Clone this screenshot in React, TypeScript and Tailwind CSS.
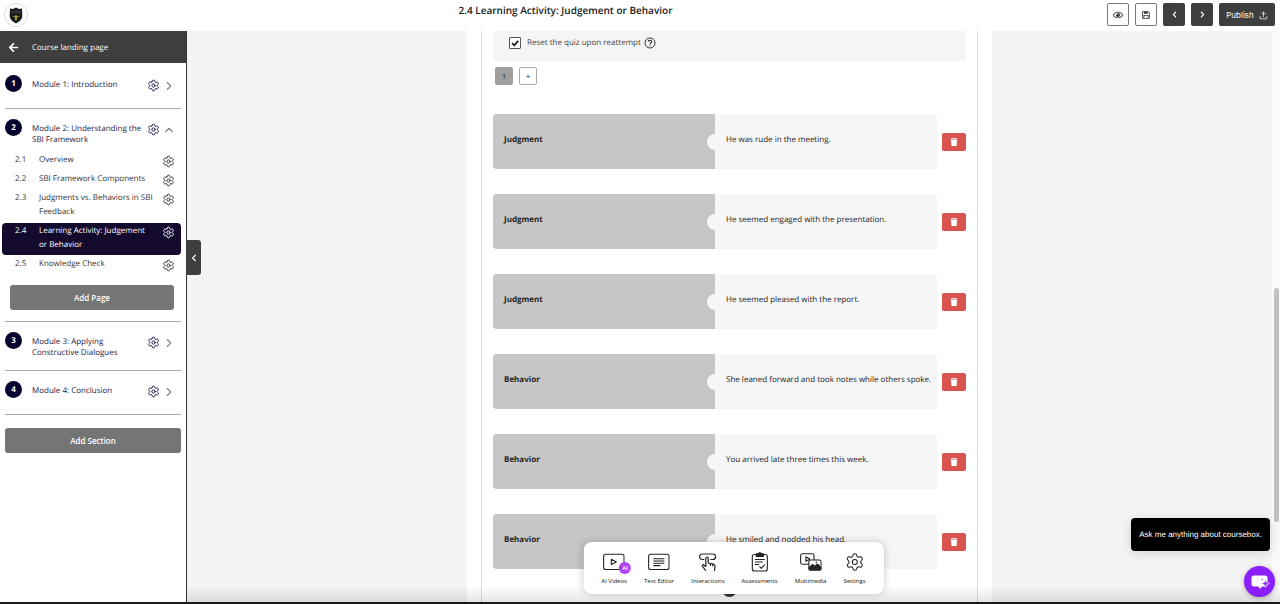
import React, { useState } from 'react';
import { Settings, Upload, ChevronRight, ChevronUp } from 'lucide-react';
import { FaArrowLeft, FaChevronLeft, FaChevronRight, FaRegEye, FaTrash } from 'react-icons/fa';
import { RiSave3Line } from 'react-icons/ri';

const modules = [
  { id: 1, title: 'Module 1: Introduction' },
  {
    id: 2,
    title: 'Module 2: Understanding the SBI Framework',
    pages: [
      { id: '2.1', title: 'Overview' },
      { id: '2.2', title: 'SBI Framework Components' },
      { id: '2.3', title: 'Judgments vs. Behaviors in SBI Feedback' },
      { id: '2.4', title: 'Learning Activity: Judgement or Behavior' },
      { id: '2.5', title: 'Knowledge Check' },
    ],
  },
  { id: 3, title: 'Module 3: Applying Constructive Dialogues' },
  { id: 4, title: 'Module 4: Conclusion' },
];

const pairs = [
  { label: 'Judgment', statement: 'He was rude in the meeting.' },
  { label: 'Judgment', statement: 'He seemed engaged with the presentation.' },
  { label: 'Judgment', statement: 'He seemed pleased with the report.' },
  { label: 'Behavior', statement: 'She leaned forward and took notes while others spoke.' },
  { label: 'Behavior', statement: 'You arrived late three times this week.' },
  { label: 'Behavior', statement: 'He smiled and nodded his head.' },
];

const Logo = () => (
  <svg viewBox="0 0 24 24" className="h-6 w-6" aria-hidden="true">
    <circle cx="12" cy="12" r="11.5" fill="#fff" stroke="#dcdce6" />
    <path d="M6 5.5 9 6l3-1.5L15 6l3-.5.3 7c0 4-3 6.3-6.3 8-3.3-1.7-6.3-4-6.3-8Z" fill="#191b1c" />
    <path d="M8.5 8v2.500M15.500 8v2.500M10.500 7.500l1.500 2 1.500-2" stroke="#6d6f70" strokeWidth=".8" fill="none" />
    <path d="M8.500 13.500 12 12.300l3.500 1.200-2.500.7v3h-2v-3Z" fill="#9c9a2c" />
  </svg>
);

const VideoIcon = () => (
  <svg viewBox="0 0 22 18" className="h-[18px] w-[22px]" fill="none" stroke="#222" strokeWidth="1.1" strokeLinejoin="round">
    <rect x=".8" y="1.2" width="20.4" height="15.3" rx="2" />
    <path d="m8.5 6.2 5 2.700-5 2.700Z" />
  </svg>
);

const TextIcon = () => (
  <svg viewBox="0 0 22 18" className="h-[18px] w-[22px]" fill="none" stroke="#222" strokeWidth="1.1">
    <rect x=".8" y="1.2" width="20.4" height="15.3" rx="2" />
    <path d="M5.500 5.700h11M5.500 8h11M5.500 10.300h11M5.500 12.600h7" />
  </svg>
);

const TouchIcon = () => (
  <svg viewBox="0 0 20 20" className="h-5 w-5" fill="none" stroke="#222" strokeWidth="1.2" strokeLinecap="round" strokeLinejoin="round">
    <path d="M6 7.500H4.500A2.500 2.500 0 0 1 4.500 2H15a2.500 2.500 0 0 1 0 5.500h-2" />
    <path d="M8 13V6.200a1.200 1.200 0 0 1 2.400 0V11l5.400 1.200c1 .3 1.500 1 1.400 2l-.5 4.300M8 11.500v3L6 13c-1-.7-2 .3-1.400 1.200l3.200 4.300M12.600 11.600v1.800M15 12.200v1.700" />
  </svg>
);

const ClipboardIcon = () => (
  <svg viewBox="0 0 18 20" className="h-5 w-[18px]" fill="none" stroke="#222" strokeWidth="1.1" strokeLinecap="round" strokeLinejoin="round">
    <rect x="1.5" y="2.5" width="15" height="16.5" rx="2" />
    <path d="M5.500 1.800h2A1.600 1.600 0 0 1 10.500 1.800h2V4.500h-7Z" fill="#222" />
    <path d="M4.500 7.500h9M4.500 10h7M4.500 12.500h3.500M9 14.800l1.500 1.500 3.200-3.400" />
  </svg>
);

const MediaIcon = () => (
  <svg viewBox="0 0 22 18" className="h-[18px] w-[22px]" fill="none" stroke="#222" strokeWidth="1.1" strokeLinejoin="round">
    <rect x=".8" y=".8" width="13.4" height="10.4" rx="1.8" />
    <path d="m6 3.800 4 2.200-4 2.200Z" />
    <rect x="9" y="7" width="12.3" height="10.3" rx="1.8" fill="#fff" />
    <path d="m9.500 16.800 0-2.300 3.200-3 2.300 2 2.600-2.500 3.400 3.500v2.300Z" fill="#222" />
    <circle cx="16.5" cy="9.2" r=".8" fill="#222" stroke="none" />
  </svg>
);

const tools = [
  { name: 'AI Videos', icon: <VideoIcon />, badge: 'AI' },
  { name: 'Text Editor', icon: <TextIcon /> },
  { name: 'Interactions', icon: <TouchIcon /> },
  { name: 'Assessments', icon: <ClipboardIcon /> },
  { name: 'Multimedia', icon: <MediaIcon /> },
  { name: 'Settings', icon: <Settings className="h-5 w-5 text-[#222]" strokeWidth={1.3} /> },
];

const Header = () => (
  <header className="flex h-[31px] shrink-0 items-start bg-white pt-[3px] pr-[5px] pl-1">
    <a href="#" aria-label="Home"><Logo /></a>
    <h1 className="flex-1 pr-1 text-center text-[10px] leading-[15px] font-semibold text-[#222]">
      2.4 Learning Activity: Judgement or Behavior
    </h1>
    <div className="flex gap-[6px]">
      <button aria-label="Preview" className="flex h-[23px] w-[22px] items-center justify-center rounded-[2px] border border-[#777] bg-white text-[#333]">
        <FaRegEye className="h-[10px] w-[10px]" />
      </button>
      <button aria-label="Save" className="flex h-[23px] w-[22px] items-center justify-center rounded-[2px] border border-[#777] bg-white text-[#333]">
        <RiSave3Line className="h-[10px] w-[10px]" />
      </button>
      <button aria-label="Previous page" className="flex h-[23px] w-[22px] items-center justify-center rounded-[2px] bg-[#3e3e3e] text-white">
        <FaChevronLeft className="h-[7px] w-[7px]" />
      </button>
      <button aria-label="Next page" className="flex h-[23px] w-[22px] items-center justify-center rounded-[2px] bg-[#3e3e3e] text-white">
        <FaChevronRight className="h-[7px] w-[7px]" />
      </button>
      <button className="flex h-[23px] w-14 items-center justify-center gap-[5px] rounded-[2px] bg-[#3e3e3e] pt-px font-['Inter',sans-serif] text-[8px] text-white">
        Publish
        <Upload className="h-[9px] w-[9px]" strokeWidth={2} />
      </button>
    </div>
  </header>
);

const Sidebar = () => (
  <aside className="relative w-[187px] shrink-0 border-r border-[#333] bg-white">
    <a href="#" className="flex h-8 items-center bg-[#3e3e3e] pt-px pl-2 text-white">
      <FaArrowLeft className="h-[11px] w-[11px]" />
      <span className="ml-[13px] text-[8px]">Course landing page</span>
    </a>
    <nav className="px-[5px] pt-3">
      {modules.map((module) => (
        <section key={module.id} className="mb-[10px] border-b border-[#aaa]">
          <div className={module.pages ? 'flex min-h-8 items-start' : 'flex min-h-[33px] items-start pb-3'}>
            <span className="flex h-[17px] w-[17px] shrink-0 items-center justify-center rounded-full bg-[#06042f] text-[8px] font-bold text-white">
              {module.id}
            </span>
            <a href="#" className="mt-1 ml-[10px] w-[110px] text-[8px] leading-[11px] text-[#1c1a4a]">{module.title}</a>
            <button aria-label={`${module.title} settings`} className="mt-1 ml-[5px] text-[#1c1a4a]">
              <Settings className="h-[13px] w-[13px]" strokeWidth={1.8} />
            </button>
            <button aria-label={`Toggle ${module.title}`} className="mt-1 ml-[2px] text-[#888]">
              {module.pages ? <ChevronUp className="h-[14px] w-[14px]" strokeWidth={2} /> : <ChevronRight className="h-[14px] w-[14px]" strokeWidth={2} />}
            </button>
          </div>
          {module.pages && (
            <div className="pt-px pb-[11px]">
              <ul className="-ml-[3px] flex flex-col gap-px">
                {module.pages.map((page) => (
                  <li
                    key={page.id}
                    className={
                      page.id === '2.4'
                        ? 'flex items-start rounded-[4px] bg-[#140a2e] pt-px pb-[3px] pl-[13px] text-white'
                        : 'flex items-start pt-px pb-[3px] pl-[13px] text-[#333]'
                    }
                  >
                    <a href="#" className="flex w-[147px] shrink-0 text-[8px] leading-[14px]">
                      <span className="w-6 shrink-0">{page.id}</span>
                      <span className="w-[115px]">{page.title}</span>
                    </a>
                    <button aria-label={`${page.title} settings`} className="mt-[2px] -mb-[2px]">
                      <Settings className="h-[13px] w-[13px]" strokeWidth={1.8} />
                    </button>
                  </li>
                ))}
              </ul>
              <button className="mx-[5px] mt-[11px] block h-[25px] w-[164px] rounded-[3px] bg-[#757575] text-[8px] font-semibold text-white">
                Add Page
              </button>
            </div>
          )}
        </section>
      ))}
      <button className="mt-[13px] block h-[25px] w-full rounded-[3px] bg-[#757575] text-[8px] font-semibold text-white">
        Add Section
      </button>
    </nav>
    <button
      aria-label="Collapse sidebar"
      className="absolute top-[209px] left-full z-10 flex h-[35px] w-[15px] items-center justify-center rounded-r-[3px] bg-[#3e3e3e] text-white"
    >
      <FaChevronLeft className="h-2 w-2" />
    </button>
  </aside>
);

const Quiz = () => {
  const [reset, setReset] = useState(true);

  return (
    <div className="w-[525px] bg-white px-[14px]">
      <div className="min-h-full border-x border-[#ddd] px-[11px]">
        <div className="flex h-[30px] items-start rounded-b-[2px] bg-[#f5f5f5] pt-[6px] pl-4">
          <span className="grid">
            <input
              id="reset-quiz"
              type="checkbox"
              checked={reset}
              onChange={(e) => setReset(e.target.checked)}
              className="col-start-1 row-start-1 h-3 w-3 appearance-none rounded-[1px] border border-[#555] bg-white"
            />
            {reset && (
              <svg viewBox="0 0 12 12" className="pointer-events-none col-start-1 row-start-1 h-3 w-3" fill="none" stroke="#222" strokeWidth="1.8">
                <path d="m3 6 2.200 2.300L9.200 3.800" />
              </svg>
            )}
          </span>
          <label htmlFor="reset-quiz" className="ml-[6px] text-[8px] leading-3 text-[#444]">Reset the quiz upon reattempt</label>
          <svg viewBox="0 0 12 12" className="ml-[3px] h-3 w-3" fill="none" stroke="#333" strokeWidth="1">
            <circle cx="6" cy="6" r="5" />
            <path d="M4.300 4.800C4.300 2.800 7.700 2.800 7.700 4.700 7.700 5.900 6 5.900 6 7.200M6 8.200v1" strokeWidth="1.2" />
          </svg>
        </div>
        <div className="flex gap-[6px] pt-[6px] pl-[2px]">
          <button className="h-[18px] w-[18px] rounded-[2px] bg-[#9f9f9f] text-[8px] text-[#222]">1</button>
          <button className="h-[18px] w-[18px] rounded-[2px] border border-[#aaa] bg-white text-[8px] leading-3 text-[#222]">+</button>
        </div>
        <div className="mt-[29px] flex flex-col gap-[25px]">
          {pairs.map((pair) => (
            <div key={pair.statement} className="flex items-center gap-[5px]">
              <div className="relative flex h-[55px] flex-1 overflow-hidden rounded-[4px] text-[8px] leading-3">
                <div className="flex-1 bg-[#c6c6c6] pt-5 pl-[11px] font-bold text-[#222]">{pair.label}</div>
                <div className="flex-1 bg-[#f6f6f6] pt-5 pl-[11px] text-[#222]">{pair.statement}</div>
                <span className="absolute top-5 left-1/2 h-4 w-2 -translate-x-full rounded-l-full bg-[#f6f6f6]" />
              </div>
              <button aria-label={`Delete ${pair.statement}`} className="flex h-[18px] w-6 items-center justify-center rounded-[2px] bg-[#d9534f] text-white">
                <FaTrash className="h-[8px] w-[8px]" />
              </button>
            </div>
          ))}
        </div>
        <button aria-label="Add pair" className="mx-auto mt-[13px] block h-[15px] w-[15px] rounded-full bg-[#33343f]" />
      </div>
    </div>
  );
};

const Toolbar = () => (
  <div className="absolute bottom-2 left-1/2 flex -translate-x-1/2 gap-[17px] rounded-[8px] bg-white px-[18px] pt-[10px] pb-[7px] shadow-[0_0_8px_rgba(0,0,0,0.2)]">
    {tools.map((tool) => (
      <button key={tool.name} className="flex flex-col items-center">
        <span className="relative flex h-5 items-center">
          {tool.icon}
          {tool.badge && (
            <span className="absolute -right-[6px] -bottom-[2px] flex h-3 w-3 items-center justify-center rounded-full bg-[#b040f0] text-[6px] font-semibold text-white">
              {tool.badge}
            </span>
          )}
        </span>
        <span className="mt-1 text-[6px] leading-[11px] font-medium whitespace-nowrap text-[#111]">{tool.name}</span>
      </button>
    ))}
  </div>
);

const Assistant = () => (
  <div className="absolute right-[5px] bottom-[5px] flex flex-col items-end">
    <p className="mr-[5px] rounded-[4px] bg-black px-2 text-center font-['Liberation_Sans',sans-serif] text-[8px] leading-[33px] text-white shadow-[0_2px_12px_rgba(0,0,0,0.15)]">
      Ask me anything about coursebox.
    </p>
    <button aria-label="Open chat" className="mt-[15px] flex h-[31px] w-[31px] items-center justify-center rounded-full bg-[#8a1ffb] shadow-[0_1px_5px_rgba(0,0,0,0.3)]">
      <svg viewBox="0 0 20 18" className="h-[18px] w-5">
        <path d="M4 2.500h11a2.500 2.500 0 0 1 2.500 2.500v6a2.500 2.500 0 0 1-2.500 2.500h-3L10 16l-1.500-2.500H4A2.500 2.500 0 0 1 1.500 11V5A2.500 2.500 0 0 1 4 2.500Z" fill="#fff" />
        <path d="m15.500 6.500 1.100 3 3 1.100-3 1.100-1.100 3-1.100-3-3-1.100 3-1.100Z" fill="#8a1ffb" stroke="#fff" strokeWidth=".5" />
        <circle cx="12" cy="6.500" r=".7" fill="#8a1ffb" />
      </svg>
    </button>
  </div>
);

const App = () => {
  return (
    <div className="h-screen bg-black font-['Open_Sans','Noto_Sans',sans-serif] [text-rendering:geometricPrecision]">
      <div className="flex h-full flex-col overflow-hidden border-b-2 border-[#1c1a19] bg-white">
        <Header />
        <div className="flex min-h-0 flex-1">
          <Sidebar />
          <main className="relative flex min-w-0 flex-1 bg-[#f4f4f4]">
            <div className="flex flex-1 justify-center overflow-hidden">
              <Quiz />
            </div>
            {/* Scrollbar */}
            <div className="w-2 bg-[#fafafa] pr-px pl-[2px]">
              <div className="h-[45%]" />
              <div className="h-[41%] rounded-full bg-[#c1c1c1]" />
            </div>
            <div className="pointer-events-none absolute inset-x-0 bottom-0 h-4 bg-linear-to-b from-transparent to-black/10" />
            <Toolbar />
            <Assistant />
          </main>
        </div>
      </div>
    </div>
  );
};

export default App;
